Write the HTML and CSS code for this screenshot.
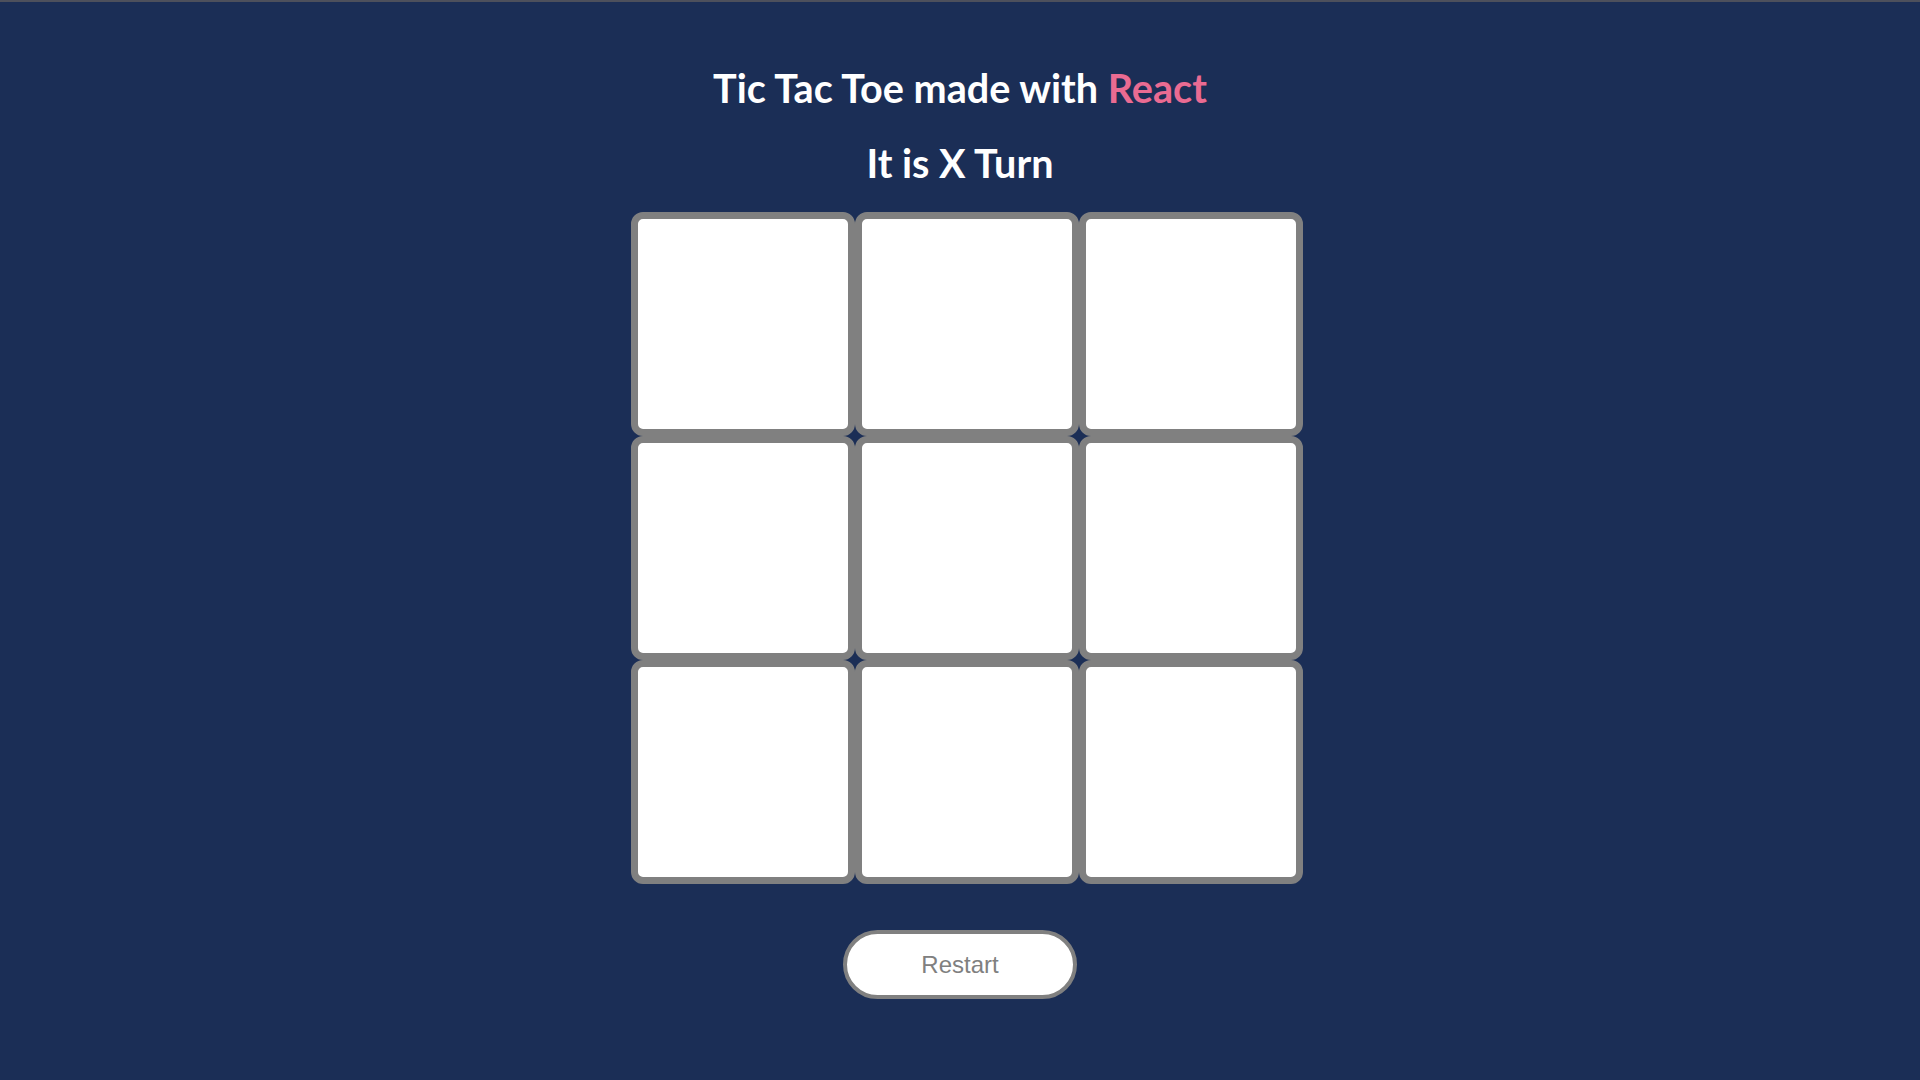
FILE: index.html
```html
<!DOCTYPE html>
<html lang="en">
<head>
<meta charset="utf-8">
<title>Tic Tac Toe</title>
<link rel="stylesheet" href="styles.css">
</head>
<body>
<div class="topline"></div>
<main class="app">
  <h1 class="title">Tic Tac Toe made with <span class="accent">React</span></h1>
  <h2 class="status">It is X Turn</h2>
  <div class="board-wrap">
    <div class="board">
      <button class="cell"></button>
      <button class="cell"></button>
      <button class="cell"></button>
      <button class="cell"></button>
      <button class="cell"></button>
      <button class="cell"></button>
      <button class="cell"></button>
      <button class="cell"></button>
      <button class="cell"></button>
    </div>
  </div>
  <button class="restart">Restart</button>
</main>
</body>
</html>
```
FILE: styles.css
```css
html, body {
  margin: 0;
  padding: 0;
  height: 100%;
}
body {
  background: #1b2e56;
  font-family: "Lato", "Open Sans", sans-serif;
  overflow: hidden;
}
.topline {
  height: 2px;
  background: #4d505c;
}
.app {
  display: flex;
  flex-direction: column;
  align-items: center;
  padding-top: 66px;
}
.title, .status {
  margin: 0;
  font-size: 39.6px;
  line-height: 40px;
  font-weight: 700;
  color: #ffffff;
}
.accent {
  color: #ea6b92;
}
.status {
  margin-top: 35px;
}
.board-wrap {
  margin-top: 29px;
  width: 686px;
  padding-left: 14px;
  box-sizing: border-box;
}
.board {
  display: grid;
  grid-template-columns: repeat(3, 224px);
  grid-template-rows: repeat(3, 224px);
}
.cell {
  box-sizing: border-box;
  width: 224px;
  height: 224px;
  margin: 0;
  padding: 0;
  background: #ffffff;
  border: 7px solid #808080;
  border-radius: 12px;
}
.restart {
  margin-top: 46px;
  box-sizing: border-box;
  width: 234px;
  height: 69px;
  background: #ffffff;
  border: 4px solid #808080;
  border-radius: 35px;
  color: #808080;
  font-family: "Liberation Sans", Arial, sans-serif;
  font-size: 24px;
  padding: 0;
}
```
